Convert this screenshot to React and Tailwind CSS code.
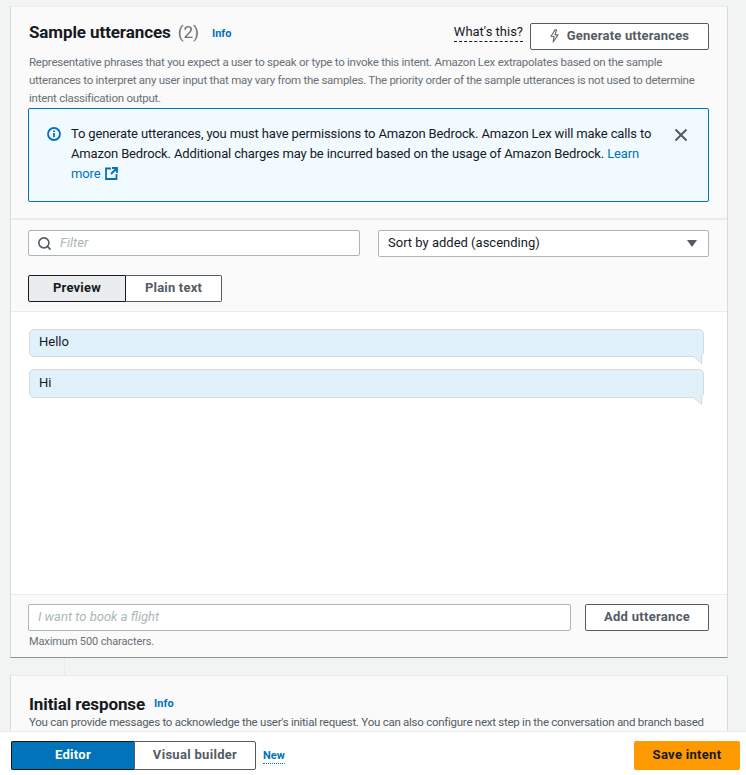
import { Search } from 'lucide-react';

function Bubble({ text, h }) {
    return (
        <div className={`relative ${h} ml-[1px] mr-[6px] bg-[#e1f1fc] border border-[#d5dbdb] rounded-[5px] pl-[9px] pb-[2px] flex items-center text-[13px] text-[#16191f]`}>
            {text}
            <svg className="absolute right-[1px] bottom-[-8px]" width="9" height="8" viewBox="0 0 9 8">
                <path d="M0 0 L8 7 L8 0 Z" fill="#e1f1fc" />
                <path d="M0 0 L8.5 7.5 L8.5 0" fill="none" stroke="#d5dbdb" strokeWidth="1" />
            </svg>
        </div>
    );
}

export default function App() {
    return (
        <div className="h-[775px] w-[746px] flex flex-col overflow-hidden bg-[#f2f3f3] text-[#16191f] font-['Roboto','Noto_Sans',sans-serif]">
            <div className="flex-1 min-h-0 overflow-hidden pt-[6px] pl-[10px] pr-[18px]">
                {/* Sample utterances */}
                <section className="h-[652px] flex flex-col bg-[#fafafa] border-l border-r border-b border-l-[#d5dbdb] border-r-[#d5dbdb] border-b-[#879596] border-t border-t-[#eaeded]">
                    <div className="h-[213px] pl-[17px] pr-[18px] pt-[16px] border-b-2 border-[#eaeded] shrink-0">
                        <div className="flex items-start h-[34px]">
                            <h2 className="text-[17px] font-bold leading-[20px] mt-[-1px] ml-[1px] tracking-[-0.1px]">Sample utterances</h2>
                            <span className="text-[17px] leading-[20px] text-[#687078] ml-[7px] mt-[-1px]">(2)</span>
                            <a className="text-[11px] font-bold text-[#0073bb] ml-[13px] mt-[3px] leading-[16px]">Info</a>
                            <span className="ml-auto text-[13px] leading-[17px] h-[19px] border-b border-dashed border-[#16191f]">What's this?</span>
                            <button className="ml-[7px] w-[179px] h-[27px] bg-white border border-[#545b64] rounded-[2px] flex items-center justify-center gap-[8px] pb-[1px] text-[13px] font-bold text-[#545b64] tracking-[0.2px]">
                                <svg width="9" height="14" viewBox="0 0 9 14" fill="none" stroke="#687078" strokeWidth="1.2" strokeLinejoin="round">
                                    <path d="M5 0.8 L1 7.5 L4 7.5 L3.2 13 L8 5.8 L5 5.8 L6.5 0.8 Z" />
                                </svg>
                                Generate utterances
                            </button>
                        </div>
                        <p className="text-[11.5px] leading-[18px] text-[#687078] mt-[-4px] ml-[1px] h-[55px] tracking-[-0.26px]">
                            Representative phrases that you expect a user to speak or type to invoke this intent. Amazon Lex extrapolates based on the sample utterances to interpret any user input that may vary from the samples. The priority order of the sample utterances is not used to determine intent classification output.
                        </p>
                        <div className="h-[94px] bg-[#f1faff] border border-[#0073bb] rounded-[2px] flex pl-[18px] pr-[20px] pt-[15px]">
                            <svg className="mt-[3px] shrink-0" width="14" height="14" viewBox="0 0 14 14" fill="none" stroke="#0073bb" strokeWidth="1.8">
                                <circle cx="7" cy="7" r="6" />
                                <path d="M7 6v4.2M7 3.4v1.6" />
                            </svg>
                            <p className="ml-[10px] text-[13px] leading-[19.8px] flex-1 tracking-[-0.14px]">
                                To generate utterances, you must have permissions to Amazon Bedrock. Amazon Lex will make calls to Amazon Bedrock. Additional charges may be incurred based on the usage of Amazon Bedrock. <a className="text-[#0073bb]">Learn more <svg className="inline mb-[2px] ml-[1px]" width="13" height="13" viewBox="0 0 13 13" fill="none" stroke="#0073bb" strokeWidth="1.8"><path d="M6 1.5H1v10.5h10.5V7M7 1h5v5M12 1L6 7" /></svg></a>
                            </p>
                            <svg className="mt-[4px] ml-[20px] shrink-0" width="14" height="14" viewBox="0 0 14 14" fill="none" stroke="#545b64" strokeWidth="2">
                                <path d="M1.5 1.5l11 11M12.5 1.5l-11 11" />
                            </svg>
                        </div>
                    </div>
                    <div className="h-[92px] px-[17px] pt-[10px] border-b border-[#eaeded] shrink-0">
                        <div className="flex gap-[18px]">
                            <div className="w-[332px] h-[26px] bg-white border border-[#aab7b8] rounded-[2px] flex items-center pl-[8px]">
                                <Search size={15} strokeWidth={2.5} className="text-[#545b64]" />
                                <span className="ml-[8px] text-[13px] italic text-[#aab7b8]">Filter</span>
                            </div>
                            <div className="w-[331px] h-[27px] bg-white border border-[#aab7b8] rounded-[2px] flex items-center pl-[9px] pr-[11px] pb-[2px] text-[13px]">
                                Sort by added (ascending)
                                <svg className="ml-auto mt-[2px]" width="10" height="7" viewBox="0 0 10 7"><path d="M0 0h10L5 7z" fill="#545b64" /></svg>
                            </div>
                        </div>
                        <div className="flex mt-[18px] h-[27px] w-[194px] text-[13px] font-bold tracking-[0.2px]">
                            <div className="w-[98px] bg-[#eaeded] border border-[#16191f] rounded-l-[2px] pb-[2px] flex items-center justify-center">Preview</div>
                            <div className="w-[96px] bg-white border border-l-0 border-[#545b64] rounded-r-[2px] pb-[2px] flex items-center justify-center text-[#545b64]">Plain text</div>
                        </div>
                    </div>
                    <div className="h-[283px] bg-white border-b border-[#eaeded] px-[17px] pt-[17px] flex flex-col gap-[12px] shrink-0">
                        <Bubble text="Hello" h="h-[28px]" />
                        <Bubble text="Hi" h="h-[29px]" />
                    </div>
                    <div className="flex-1 px-[17px] pt-[9px]">
                        <div className="flex gap-[14px]">
                            <div className="w-[543px] h-[27px] bg-white border border-[#aab7b8] rounded-[2px] flex items-center pl-[9px] pb-[2px] text-[13px] italic text-[#aab7b8]">I want to book a flight</div>
                            <button className="w-[124px] h-[27px] bg-white border border-[#545b64] rounded-[2px] pb-[2px] text-[13px] font-bold text-[#545b64] tracking-[0.3px]">Add utterance</button>
                        </div>
                        <p className="text-[11px] leading-[16px] text-[#687078] mt-[3px] ml-[1px] tracking-[-0.12px]">Maximum 500 characters.</p>
                    </div>
                </section>
                {/* connector */}
                <div className="h-[17px] w-px ml-[54px] border-l border-dotted border-[#d5e9f5]"></div>
                {/* Initial response */}
                <section className="h-[100px] bg-[#fafafa] border border-[#eaeded] border-l-[#d5dbdb] border-r-[#d5dbdb] px-[17px] pt-[18px]">
                    <div className="flex items-center ml-[1px]">
                        <h2 className="text-[17px] font-bold leading-[20px] tracking-[-0.1px]">Initial response</h2>
                        <a className="text-[11px] font-bold text-[#0073bb] ml-[9px] mt-[1px]">Info</a>
                    </div>
                    <p className="text-[11.5px] leading-[18px] text-[#545b64] ml-[1px] mt-[-1px] whitespace-nowrap tracking-[-0.26px]">You can provide messages to acknowledge the user's initial request. You can also configure next step in the conversation and branch based</p>
                </section>
            </div>
            {/* Bottom bar */}
            <div className="h-[44px] shrink-0 bg-white border-t border-[#eaeded] flex items-center pl-[11px] pr-[6px] pt-[4px]">
                <div className="flex h-[29px] w-[245px] text-[13px] font-bold tracking-[0.3px]">
                    <div className="w-[123px] bg-[#0073bb] border border-[#16191f] border-r-0 text-white rounded-l-[2px] pb-[2px] flex items-center justify-center">Editor</div>
                    <div className="w-[122px] bg-white border border-[#545b64] rounded-r-[2px] pb-[2px] flex items-center justify-center text-[#545b64]">Visual builder</div>
                </div>
                <a className="ml-[7px] text-[11px] font-bold text-[#0073bb] leading-[15px] border-b border-dotted border-[#0073bb]">New</a>
                <button className="ml-auto w-[106px] h-[29px] bg-[#ff9900] rounded-[2px] pb-[2px] text-[13px] font-bold text-[#16191f] tracking-[0.3px]">Save intent</button>
            </div>
        </div>
    );
}
